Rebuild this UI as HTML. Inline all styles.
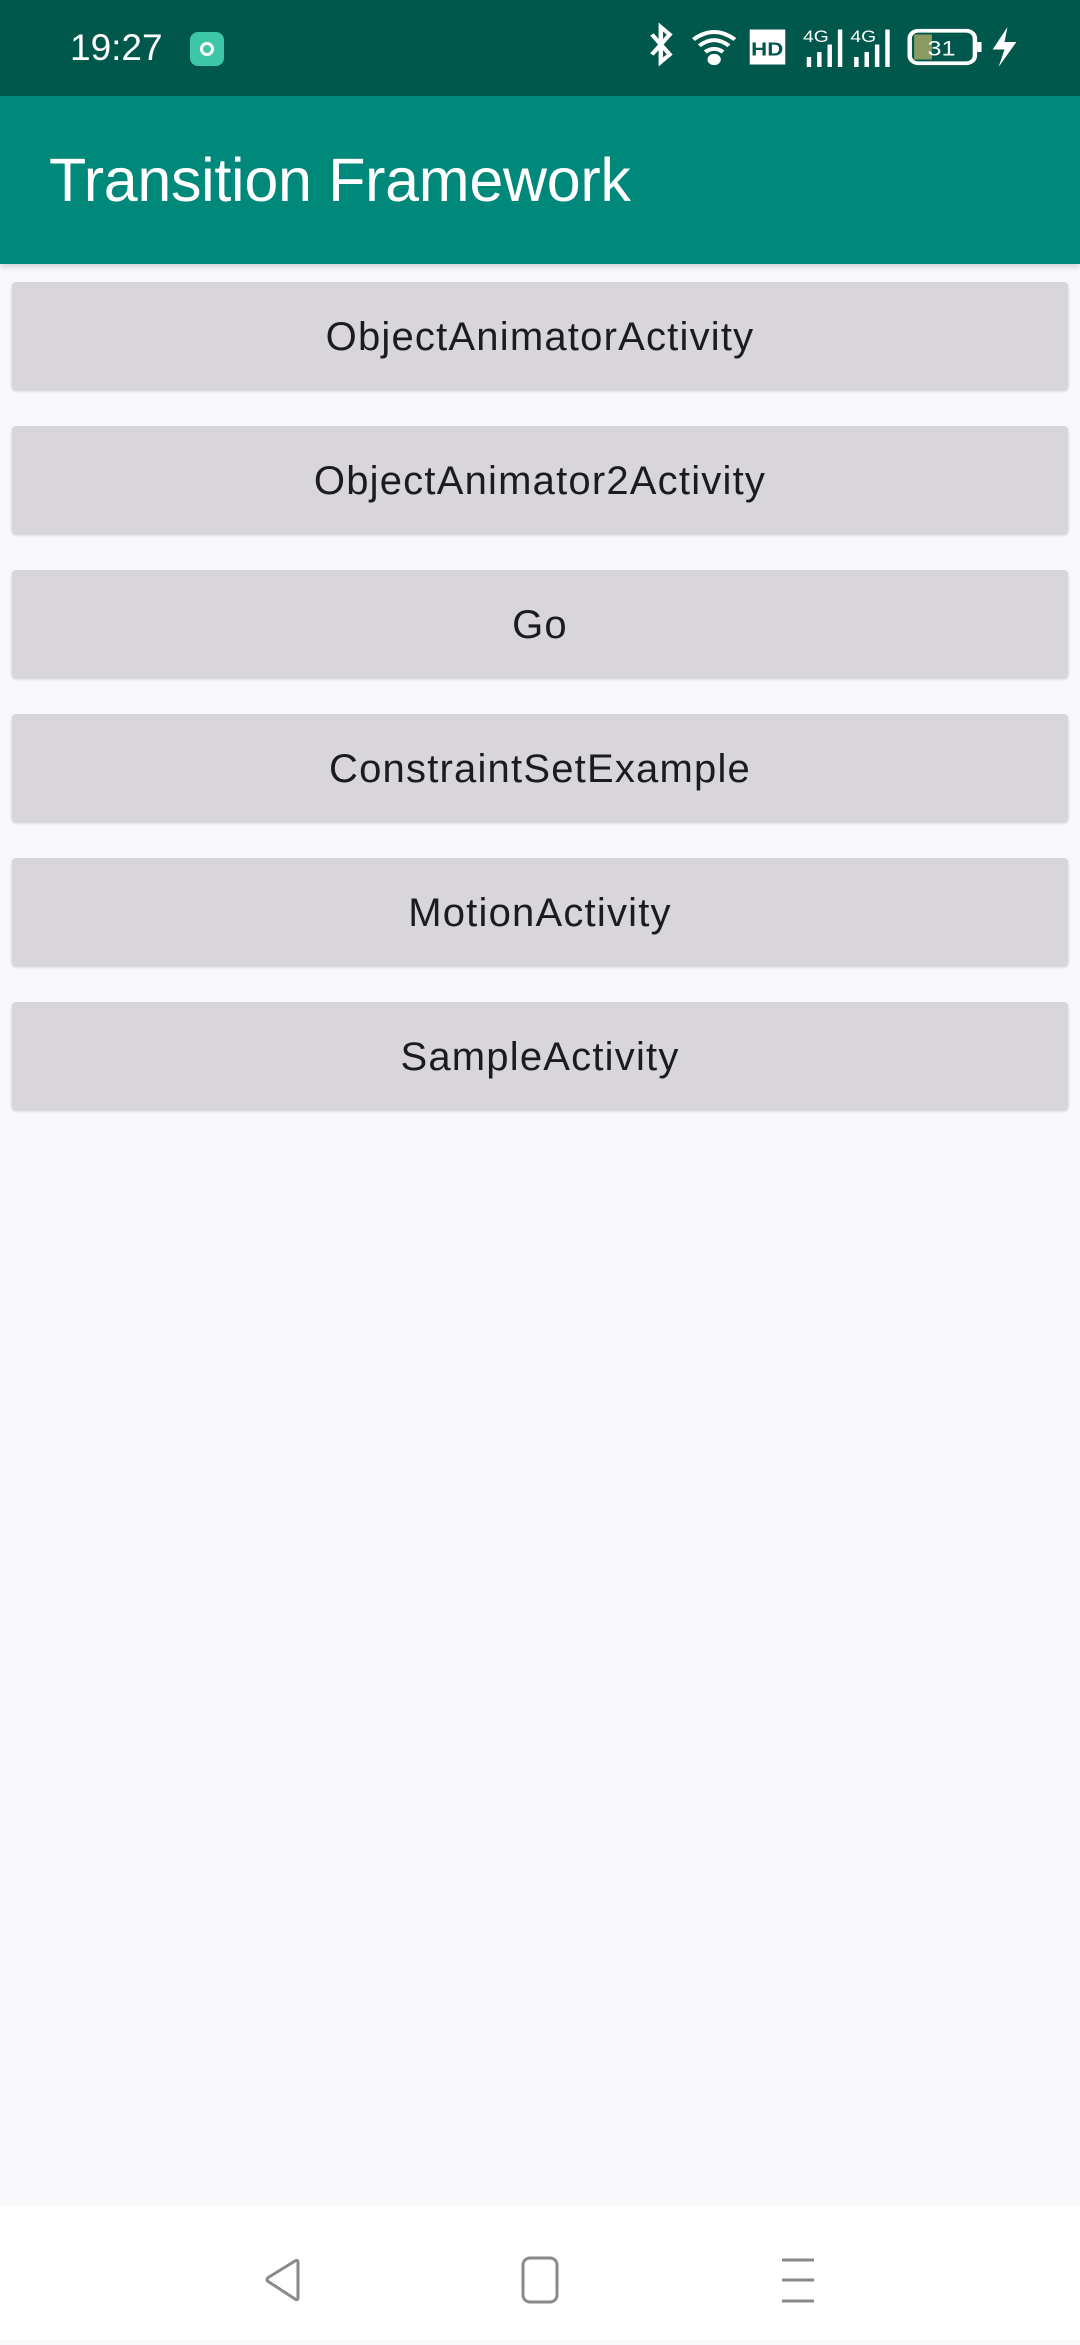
<!DOCTYPE html>
<html><head><meta charset="utf-8"><style>
*{margin:0;padding:0;box-sizing:border-box}
body{width:1080px;height:2340px;background:#f9f8fb;font-family:"Liberation Sans",sans-serif;position:relative;overflow:hidden}
.sb{position:absolute;left:0;top:0;width:1080px;height:96px;background:#00574b;color:#fff}
.ab{position:absolute;left:0;top:96px;width:1080px;height:168px;background:#00887a;box-shadow:0 3px 6px rgba(0,0,0,.15)}
.ab div{position:absolute;left:49px;top:49px;color:#fff;font-size:61px;letter-spacing:-0.3px}
.btn{position:absolute;left:12px;width:1056px;height:107px;background:#d8d6d9;border-radius:4px;box-shadow:0 2px 3px rgba(0,0,0,.2);color:#1c1b1f;font-size:40px;letter-spacing:1.2px;text-align:center;line-height:110px}
.nav{position:absolute;left:0;top:2206px;width:1080px;height:134px;background:#fff}
</style></head><body>
<div class="sb">
<div style="position:absolute;left:70px;top:27px;font-size:37px">19:27</div>
<div style="position:absolute;left:190px;top:32px;width:34px;height:34px;border-radius:8px;background:#3dc6a8"><div style="position:absolute;left:10px;top:10px;width:14px;height:14px;border-radius:50%;border:3px solid #fff"></div></div>
<svg style="position:absolute;left:646px;top:22px" width="400" height="50" viewBox="0 0 270 40" preserveAspectRatio="none" fill="none" stroke="#fff" stroke-width="3">
<path d="M4 10 L16 26 L10 32 V4 L16 10 L4 26"/>
<path d="M32 14 Q46 2 60 14 M36 19 Q46 10 56 19 M40 24 Q46 19 52 24"/><circle cx="46" cy="30" r="3" fill="#fff"/>
<rect x="70" y="6" width="24" height="28" fill="#fff" stroke="none"/><text x="71" y="27" font-size="15" fill="#00574b" stroke="none" font-weight="bold" font-family="Liberation Sans">HD</text>
<text x="106" y="16" font-size="13" fill="#fff" stroke="none" font-family="Liberation Sans">4G</text>
<path d="M110 36V28 M117 36V24 M124 36V18 M131 36V6"/>
<text x="138" y="16" font-size="13" fill="#fff" stroke="none" font-family="Liberation Sans">4G</text>
<path d="M142 36V28 M149 36V24 M156 36V18 M163 36V6"/>
<rect x="178" y="7" width="44" height="26" rx="6"/><rect x="181" y="10" width="12" height="20" fill="#8a9a60" stroke="none"/>
<text x="190" y="27" font-size="17" fill="#fff" stroke="none" font-family="Liberation Sans">31</text>
<path d="M225 16V24"/><path d="M244 4 L234 22 H242 L238 36 L250 16 H242 Z" fill="#fff" stroke="none"/>
</svg>
</div>
<div class="ab"><div>Transition Framework</div></div>
<div class="btn" style="top:282px">ObjectAnimatorActivity</div>
<div class="btn" style="top:426px">ObjectAnimator2Activity</div>
<div class="btn" style="top:570px">Go</div>
<div class="btn" style="top:714px">ConstraintSetExample</div>
<div class="btn" style="top:858px">MotionActivity</div>
<div class="btn" style="top:1002px">SampleActivity</div>
<div class="nav">
<svg width="1080" height="134" fill="none" stroke="#8a8a8a" stroke-width="3">
<path d="M295 55 Q298 53 298 57 V91 Q298 95 295 93 L269 76 Q265 74 269 71 Z"/>
<rect x="523" y="52" width="34" height="44" rx="7"/>
<path d="M782 54H814 M782 74H814 M782 95H814"/>
</svg>
</div>
</body></html>
